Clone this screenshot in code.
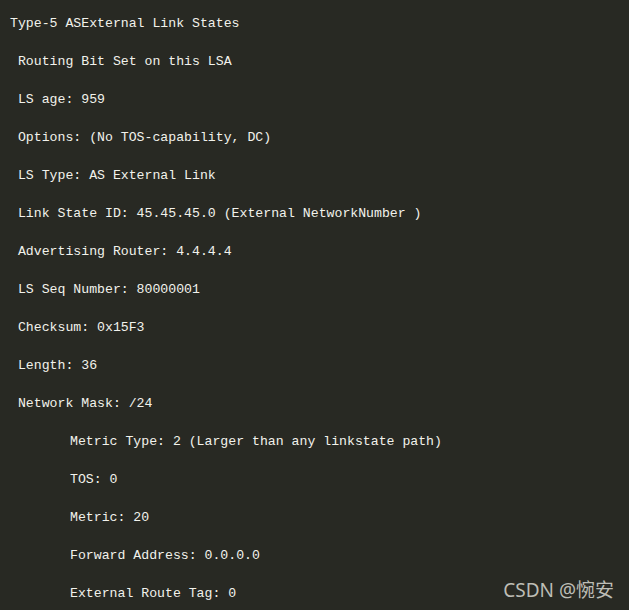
const lines: { text: string; indent?: boolean }[] = [
  { text: "Type-5 ASExternal Link States" },
  { text: " Routing Bit Set on this LSA" },
  { text: " LS age: 959" },
  { text: " Options: (No TOS-capability, DC)" },
  { text: " LS Type: AS External Link" },
  { text: " Link State ID: 45.45.45.0 (External NetworkNumber )" },
  { text: " Advertising Router: 4.4.4.4" },
  { text: " LS Seq Number: 80000001" },
  { text: " Checksum: 0x15F3" },
  { text: " Length: 36" },
  { text: " Network Mask: /24" },
  { text: "Metric Type: 2 (Larger than any linkstate path)", indent: true },
  { text: "TOS: 0", indent: true },
  { text: "Metric: 20", indent: true },
  { text: "Forward Address: 0.0.0.0", indent: true },
  { text: "External Route Tag: 0", indent: true },
]

export default function App() {
  return (
    <div className="relative h-[610px] w-[629px] overflow-hidden bg-[#282923] pl-[10px] pt-[5px]">
      {lines.map((l, i) => (
        <div
          key={i}
          className={`h-[38px] whitespace-pre font-['Liberation_Mono',monospace] text-[13.2px] leading-[38px] text-[#f2f2ec] ${
            l.indent ? "pl-[60px]" : ""
          }`}
        >
          {l.text}
        </div>
      ))}
      <div className="absolute bottom-[6px] right-[15px] font-['Noto_Sans','Noto_Sans_CJK_SC',sans-serif] text-[19px] text-[#bdbdb5]">
        CSDN @惋安
      </div>
    </div>
  )
}
